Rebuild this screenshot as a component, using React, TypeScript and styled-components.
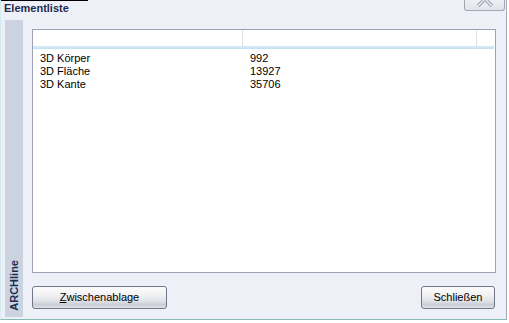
import React from "react";
import styled, { createGlobalStyle } from "styled-components";

const Global = createGlobalStyle`
  html, body { margin: 0; padding: 0; background: #ffffff; }
  body { font-family: "Liberation Sans", Arial, sans-serif; font-size: 11px; }
`;

const Window = styled.div`
  box-sizing: border-box;
  width: 507px;
  height: 320px;
  background: #eef0f7;
  border-left: 1px solid #d3eaf3;
  border-right: 1px solid #a6abb8;
  border-bottom: 1px solid #86bab2;
  display: flex;
  flex-direction: column;
`;

const TitleBar = styled.div`
  height: 20px;
  display: flex;
  justify-content: space-between;
  align-items: flex-start;
  flex: none;
`;

const Title = styled.div`
  box-sizing: border-box;
  width: 87px;
  border-top: 1px solid #000000;
  padding: 1px 0 0 3px;
  font-family: "Liberation Sans", Arial, sans-serif;
  font-weight: bold;
  font-size: 11px;
  line-height: 13px;
  color: #1d2b50;
`;

const CloseButton = styled.div`
  box-sizing: border-box;
  width: 41px;
  height: 11px;
  margin-right: 1px;
  border: 1px solid #a2a7b4;
  border-top: none;
  border-radius: 0 0 3px 3px;
  background: linear-gradient(to bottom, #eef0f5, #e0e3ea);
  display: flex;
  justify-content: center;
  overflow: hidden;
`;

const Body = styled.div`
  flex: 1;
  display: flex;
  min-height: 0;
`;

const Sidebar = styled.div`
  width: 18px;
  margin: 0 0 2px 4px;
  background: #cbd3e0;
  display: flex;
  flex-direction: column;
  justify-content: flex-end;
  align-items: center;
  padding-bottom: 6px;
  box-sizing: border-box;
`;

const SideLabel = styled.div`
  writing-mode: vertical-rl;
  transform: rotate(180deg);
  font-family: "Liberation Sans", Arial, sans-serif;
  font-weight: bold;
  font-size: 11px;
  line-height: 13px;
  color: #1d2b50;
`;

const Main = styled.div`
  flex: 1;
  display: flex;
  flex-direction: column;
  padding: 9px 10px 0 9px;
`;

const ListBox = styled.div`
  box-sizing: border-box;
  height: 244px;
  border: 1px solid #9da3b4;
  background: #ffffff;
  display: flex;
  flex-direction: column;
`;

const cols = "210px 234px 17px";

const HeaderRow = styled.div`
  display: grid;
  grid-template-columns: ${cols};
  height: 19px;
  margin-bottom: 3px;
`;

const HeaderCell = styled.div<{ $last?: boolean }>`
  box-sizing: border-box;
  border-right: ${(p) => (p.$last ? "none" : "1px solid #e0e1e8")};
  background: linear-gradient(
    to bottom,
    #ffffff 0,
    #ffffff 16px,
    #d9edf9 16px,
    #bfe0f2 19px
  );
`;

const Row = styled.div`
  display: grid;
  grid-template-columns: ${cols};
  height: 13px;
  line-height: 13px;
  font-size: 11px;
  color: #000000;
`;

const Cell = styled.div`
  padding-left: 7px;
  white-space: nowrap;
`;

const ButtonRow = styled.div`
  display: flex;
  justify-content: space-between;
  margin-top: 13px;
  padding-right: 1px;
`;

const Button = styled.button<{ $w: number }>`
  box-sizing: border-box;
  width: ${(p) => p.$w}px;
  height: 23px;
  padding: 0;
  border: 1px solid #707887;
  border-radius: 3px;
  background: linear-gradient(
    to bottom,
    #fcfcfd 0%,
    #f3f3f5 35%,
    #e1e3e8 65%,
    #c9cdd5 85%,
    #dfe1e7 100%
  );
  font-family: "Liberation Sans", Arial, sans-serif;
  font-size: 11px;
  color: #000000;
  line-height: 21px;
`;

const Accel = styled.span`
  text-decoration: underline;
`;

const rows = [
  ["3D Körper", "992"],
  ["3D Fläche", "13927"],
  ["3D Kante", "35706"],
];

export default function App() {
  return (
    <>
      <Global />
      <Window>
        <TitleBar>
          <Title>Elementliste</Title>
          <CloseButton>
            <svg width="16" height="10" viewBox="0 0 16 10">
              <path
                d="M1 -8 L15 6 M15 -8 L1 6"
                stroke="#9a9fab"
                strokeWidth="3.4"
                fill="none"
              />
              <path
                d="M1 -8 L15 6 M15 -8 L1 6"
                stroke="#eef0f5"
                strokeWidth="1.4"
                fill="none"
              />
            </svg>
          </CloseButton>
        </TitleBar>
        <Body>
          <Sidebar>
            <SideLabel>ARCHline</SideLabel>
          </Sidebar>
          <Main>
            <ListBox>
              <HeaderRow>
                <HeaderCell />
                <HeaderCell />
                <HeaderCell $last />
              </HeaderRow>
              {rows.map(([name, count]) => (
                <Row key={name}>
                  <Cell>{name}</Cell>
                  <Cell>{count}</Cell>
                  <Cell />
                </Row>
              ))}
            </ListBox>
            <ButtonRow>
              <Button $w={135}>
                <Accel>Z</Accel>wischenablage
              </Button>
              <Button $w={74}>Schließen</Button>
            </ButtonRow>
          </Main>
        </Body>
      </Window>
    </>
  );
}
